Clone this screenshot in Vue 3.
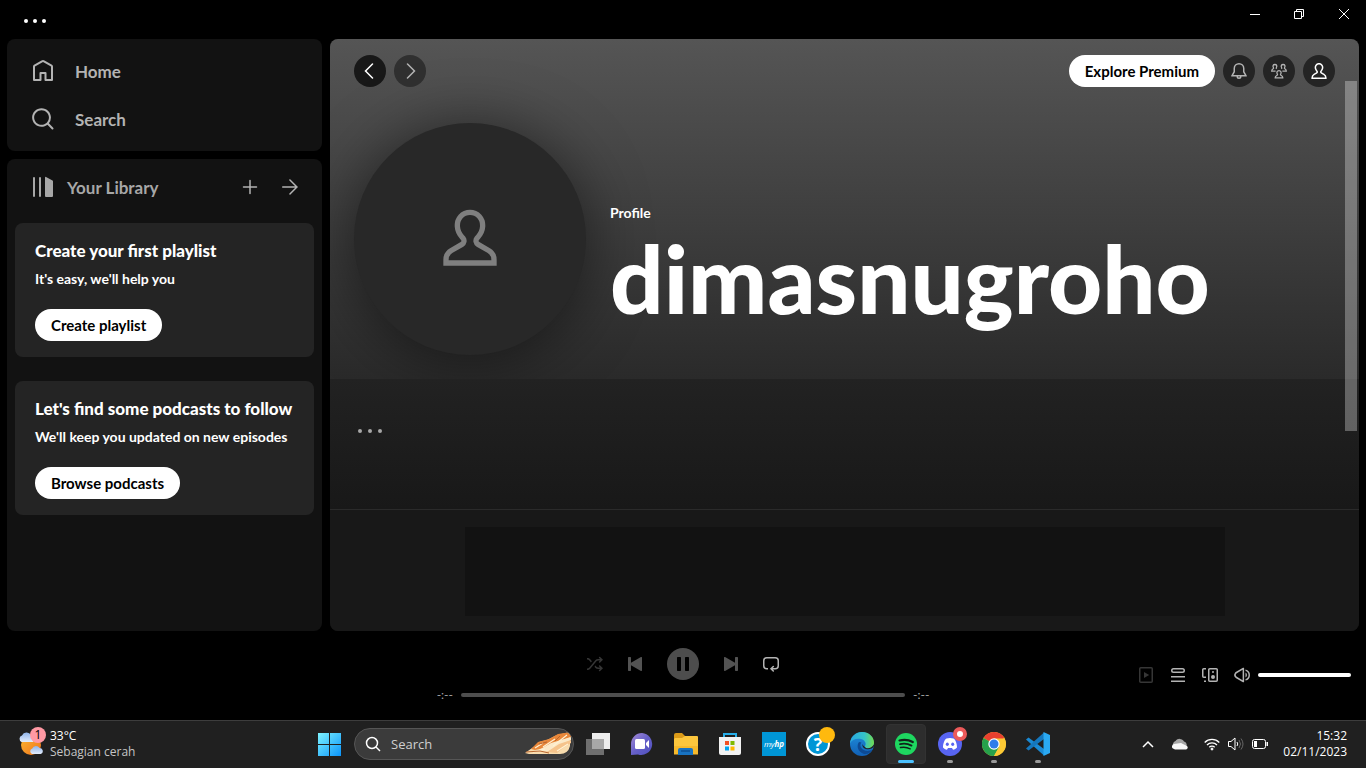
<script setup>
import { ref } from 'vue'

const volume = ref(100)
const position = ref(0)
const query = ref('')

const navLinks = [
  {
    label: 'Home',
    path: 'M12.5 3.247a1 1 0 0 0-1 0L4 7.577V20h4.5v-6a1 1 0 0 1 1-1h5a1 1 0 0 1 1 1v6H20V7.577l-7.5-4.33zm-2-1.732a3 3 0 0 1 3 0l7.5 4.33a2 2 0 0 1 1 1.732V21a1 1 0 0 1-1 1h-6.5a1 1 0 0 1-1-1v-6h-3v6a1 1 0 0 1-1 1H3a1 1 0 0 1-1-1V7.577a2 2 0 0 1 1-1.732l7.5-4.33z',
  },
  {
    label: 'Search',
    path: 'M10.533 1.279c-5.18 0-9.407 4.14-9.407 9.279s4.226 9.279 9.407 9.279c2.234 0 4.29-.77 5.907-2.058l4.353 4.353a1 1 0 1 0 1.414-1.414l-4.344-4.344a9.157 9.157 0 0 0 2.077-5.816c0-5.14-4.226-9.28-9.407-9.28zm-7.407 9.279c0-4.006 3.302-7.28 7.407-7.28s7.407 3.274 7.407 7.28-3.302 7.279-7.407 7.279-7.407-3.273-7.407-7.28z',
  },
]

const prompts = [
  { title: 'Create your first playlist', text: "It's easy, we'll help you", action: 'Create playlist' },
  { title: "Let's find some podcasts to follow", text: "We'll keep you updated on new episodes", action: 'Browse podcasts' },
]

const icons = {
  library: 'M3 22a1 1 0 0 1-1-1V3a1 1 0 0 1 2 0v18a1 1 0 0 1-1 1zM15.5 2.134A1 1 0 0 0 14 3v18a1 1 0 0 0 1 1h6a1 1 0 0 0 1-1V6.464a1 1 0 0 0-.5-.866l-6-3.464zM9 2a1 1 0 0 0-1 1v18a1 1 0 1 0 2 0V3a1 1 0 0 0-1-1z',
  plus: 'M15.25 8a.75.75 0 0 1-.75.75H8.75v5.75a.75.75 0 0 1-1.5 0V8.75H1.5a.75.75 0 0 1 0-1.5h5.75V1.5a.75.75 0 0 1 1.5 0v5.75h5.75a.75.75 0 0 1 .75.75z',
  arrow: 'M7.19 1A.749.749 0 0 1 8.47.47L16 7.99l-7.53 7.521a.75.75 0 0 1-1.234-.815.75.75 0 0 1 .174-.243l5.72-5.714H.75a.75.75 0 1 1 0-1.498h12.38L7.41 1.529a.749.749 0 0 1-.22-.53z',
  back: 'M11.03.47a.75.75 0 0 1 0 1.06L4.56 8l6.47 6.47a.75.75 0 1 1-1.06 1.06L2.44 8 9.97.47a.75.75 0 0 1 1.06 0z',
  forward: 'M4.97.47a.75.75 0 0 0 0 1.06L11.44 8l-6.47 6.47a.75.75 0 1 0 1.06 1.06L13.56 8 6.03.47a.75.75 0 0 0-1.06 0z',
  bell: 'M8 1.5a4 4 0 0 0-4 4v3.27a.75.75 0 0 1-.1.373L2.255 12h11.49L12.1 9.142a.75.75 0 0 1-.1-.374V5.5a4 4 0 0 0-4-4zm-5.5 4a5.5 5.5 0 0 1 11 0v3.067l2.193 3.809a.75.75 0 0 1-.65 1.124H10.5a2.5 2.5 0 0 1-5 0H.957a.75.75 0 0 1-.65-1.124L2.5 8.569V5.5zm4.5 8a1 1 0 1 0 2 0H7z',
  person: 'M6.233.371a4.388 4.388 0 0 1 5.002 1.052c.421.459.713.992.904 1.554.143.421.263 1.173.22 1.894-.078 1.322-.638 2.408-1.399 3.316l-.127.152a.75.75 0 0 0 .201 1.13l2.209 1.275a4.75 4.75 0 0 1 2.375 4.114V16H.382v-1.143a4.75 4.75 0 0 1 2.375-4.113l2.209-1.275a.75.75 0 0 0 .201-1.13l-.126-.152c-.761-.908-1.322-1.994-1.4-3.316-.043-.721.077-1.473.22-1.894a4.346 4.346 0 0 1 .904-1.554c.411-.448.91-.807 1.468-1.052zM8 1.5a2.888 2.888 0 0 0-2.13.937 2.85 2.85 0 0 0-.588 1.022c-.077.226-.175.783-.143 1.323.054.921.44 1.712 1.051 2.442l.129.154a2.25 2.25 0 0 1-.603 3.39l-2.209 1.275A3.25 3.25 0 0 0 1.902 14.5h12.196a3.25 3.25 0 0 0-1.605-2.457l-2.209-1.275a2.25 2.25 0 0 1-.603-3.39l.129-.154c.612-.73.997-1.52 1.052-2.442.032-.54-.067-1.097-.144-1.323a2.85 2.85 0 0 0-.588-1.022A2.888 2.888 0 0 0 8 1.5z',
  avatar: 'M10.165 11.101a2.5 2.5 0 0 1-.67 3.766L5.5 17.173A2.998 2.998 0 0 0 4 19.771v.232h16.001v-.232a3 3 0 0 0-1.5-2.598l-3.995-2.306a2.5 2.5 0 0 1-.67-3.766l.521-.626.002-.002c.8-.955 1.303-1.987 1.375-3.19.041-.706-.088-1.433-.187-1.727a3.717 3.717 0 0 0-.768-1.334 3.767 3.767 0 0 0-5.557 0c-.34.37-.593.82-.768 1.334-.1.294-.228 1.021-.187 1.727.072 1.203.575 2.235 1.375 3.19l.002.002.52.626zm5.727.657-.52.624a.5.5 0 0 0 .134.753l3.995 2.306a5 5 0 0 1 2.5 4.33v2.232H2V19.77a5 5 0 0 1 2.5-4.33l3.995-2.306a.5.5 0 0 0 .134-.753l-.518-.622-.002-.002c-1-1.192-1.735-2.62-1.838-4.356-.056-.947.101-1.935.29-2.49A5.713 5.713 0 0 1 7.748 2.87a5.768 5.768 0 0 1 8.505 0 5.713 5.713 0 0 1 1.187 2.043c.189.554.346 1.542.29 2.489-.103 1.736-.838 3.163-1.837 4.355z',
  shuffle: 'M13.151.922a.75.75 0 1 0-1.06 1.06L13.109 3H11.16a3.75 3.75 0 0 0-2.873 1.34l-6.173 7.356A2.25 2.25 0 0 1 .39 12.5H0V14h.391a3.75 3.75 0 0 0 2.873-1.34l6.173-7.356a2.25 2.25 0 0 1 1.724-.804h1.947l-1.017 1.018a.75.75 0 0 0 1.06 1.06L15.98 3.75 13.15.922zM.391 3.5H0V2h.391c1.109 0 2.16.49 2.873 1.34L4.89 5.277l-.979 1.167-1.796-2.14A2.25 2.25 0 0 0 .39 3.5zM7.5 10.723l.98-1.167.957 1.14a2.25 2.25 0 0 0 1.724.804h1.947l-1.017-1.018a.75.75 0 1 1 1.06-1.06l2.829 2.828-2.829 2.828a.75.75 0 1 1-1.06-1.06L13.109 13H11.16a3.75 3.75 0 0 1-2.873-1.34l-.787-.938z',
  previous: 'M3.3 1a.7.7 0 0 1 .7.7v5.15l9.95-5.744a.7.7 0 0 1 1.05.606v12.575a.7.7 0 0 1-1.05.607L4 9.149V14.3a.7.7 0 0 1-.7.7H1.7a.7.7 0 0 1-.7-.7V1.7a.7.7 0 0 1 .7-.7h1.6z',
  pause: 'M2.7 1a.7.7 0 0 0-.7.7v12.6a.7.7 0 0 0 .7.7h2.6a.7.7 0 0 0 .7-.7V1.7a.7.7 0 0 0-.7-.7H2.7zm8 0a.7.7 0 0 0-.7.7v12.6a.7.7 0 0 0 .7.7h2.6a.7.7 0 0 0 .7-.7V1.7a.7.7 0 0 0-.7-.7h-2.6z',
  next: 'M12.7 1a.7.7 0 0 0-.7.7v5.15L2.05 1.107A.7.7 0 0 0 1 1.712v12.575a.7.7 0 0 0 1.05.607L12 9.149V14.3a.7.7 0 0 0 .7.7h1.6a.7.7 0 0 0 .7-.7V1.7a.7.7 0 0 0-.7-.7h-1.6z',
  repeat: 'M0 4.75A3.75 3.75 0 0 1 3.75 1h8.5A3.75 3.75 0 0 1 16 4.75v5a3.75 3.75 0 0 1-3.75 3.75H9.81l1.018 1.018a.75.75 0 1 1-1.06 1.06L6.939 12.75l2.829-2.828a.75.75 0 1 1 1.06 1.06L9.811 12h2.439a2.25 2.25 0 0 0 2.25-2.25v-5a2.25 2.25 0 0 0-2.25-2.25h-8.5A2.25 2.25 0 0 0 1.5 4.75v5A2.25 2.25 0 0 0 3.75 12H5v1.5H3.75A3.75 3.75 0 0 1 0 9.75v-5z',
}

const extras = [
  {
    label: 'Now playing view',
    dim: true,
    path: 'M11.196 8 6 5v6l5.196-3zM15.002 1.75A1.75 1.75 0 0 0 13.252 0h-10.5a1.75 1.75 0 0 0-1.75 1.75v12.5c0 .966.783 1.75 1.75 1.75h10.5a1.75 1.75 0 0 0 1.75-1.75V1.75zm-1.75-.25a.25.25 0 0 1 .25.25v12.5a.25.25 0 0 1-.25.25h-10.5a.25.25 0 0 1-.25-.25V1.75a.25.25 0 0 1 .25-.25h10.5z',
  },
  {
    label: 'Queue',
    dim: false,
    path: 'M15 15H1v-1.5h14V15zm0-4.5H1V9h14v1.5zm-14-7A2.5 2.5 0 0 1 3.5 1h9a2.5 2.5 0 0 1 0 5h-9A2.5 2.5 0 0 1 1 3.5zm2.5-1a1 1 0 0 0 0 2h9a1 1 0 1 0 0-2h-9z',
  },
  {
    label: 'Connect to a device',
    dim: false,
    path: 'M6 2.75C6 1.784 6.784 1 7.75 1h6.5c.966 0 1.75.784 1.75 1.75v10.5A1.75 1.75 0 0 1 14.25 15h-6.5A1.75 1.75 0 0 1 6 13.25V2.75zm1.75-.25a.25.25 0 0 0-.25.25v10.5c0 .138.112.25.25.25h6.5a.25.25 0 0 0 .25-.25V2.75a.25.25 0 0 0-.25-.25h-6.5zm-6 0a.25.25 0 0 0-.25.25v6.5c0 .138.112.25.25.25H4V11H1.75A1.75 1.75 0 0 1 0 9.25v-6.5C0 1.784.784 1 1.75 1H4v1.5H1.75zM4 15H2v-1.5h2V15zM13 10a2 2 0 1 1-4 0 2 2 0 0 1 4 0zm-1-5a1 1 0 1 1-2 0 1 1 0 0 1 2 0z',
  },
  {
    label: 'Mute',
    dim: false,
    path: 'M9.741.85a.75.75 0 0 1 .375.65v13a.75.75 0 0 1-1.125.65l-6.925-4a3.642 3.642 0 0 1-1.33-4.967 3.639 3.639 0 0 1 1.33-1.332l6.925-4a.75.75 0 0 1 .75 0zm-6.924 5.3a2.139 2.139 0 0 0 0 3.7l5.8 3.35V2.8l-5.8 3.35zm8.683 4.29V5.56a2.75 2.75 0 0 1 0 4.88zM11.5 13.614a5.752 5.752 0 0 0 0-11.228v1.55a4.252 4.252 0 0 1 0 8.127v1.55z',
  },
]
</script>

<template>
  <div class="screen">
    <header class="titlebar">
      <button class="plain menu-dots" aria-label="Menu"><i></i><i></i><i></i></button>
      <div class="window-buttons">
        <button class="plain" aria-label="Minimize">
          <svg width="12" height="12" viewBox="0 0 12 12"><path d="M0 6.500h10" /></svg>
        </button>
        <button class="plain" aria-label="Restore">
          <svg width="12" height="12" viewBox="0 0 12 12"><path d="M.5 3.500h7v7h-7zM2.500 3.500v-2h7v7h-2" /></svg>
        </button>
        <button class="plain" aria-label="Close">
          <svg width="12" height="12" viewBox="0 0 12 12"><path d="M1 1l10 10M11 1L1 11" /></svg>
        </button>
      </div>
    </header>

    <div class="workspace">
      <aside class="sidebar">
        <nav class="panel nav">
          <a v-for="link in navLinks" :key="link.label" href="#" class="nav-link">
            <svg width="24" height="24" viewBox="0 0 24 24"><path :d="link.path" /></svg>
            <span>{{ link.label }}</span>
          </a>
        </nav>

        <section class="panel library">
          <div class="library-head">
            <button class="plain library-title">
              <svg width="24" height="24" viewBox="0 0 24 24"><path :d="icons.library" /></svg>
              <span>Your Library</span>
            </button>
            <button class="plain square" aria-label="Create playlist or folder">
              <svg width="16" height="16" viewBox="0 0 16 16"><path :d="icons.plus" /></svg>
            </button>
            <button class="plain square" aria-label="Show more">
              <svg width="16" height="16" viewBox="0 0 16 16"><path :d="icons.arrow" /></svg>
            </button>
          </div>
          <div class="prompts">
            <article v-for="prompt in prompts" :key="prompt.title" class="prompt">
              <h2>{{ prompt.title }}</h2>
              <p>{{ prompt.text }}</p>
              <button class="pill">{{ prompt.action }}</button>
            </article>
          </div>
        </section>
      </aside>

      <main class="content">
        <section class="profile">
          <div class="topbar">
            <button class="round dark" aria-label="Go back">
              <svg width="16" height="16" viewBox="0 0 16 16"><path :d="icons.back" /></svg>
            </button>
            <button class="round faded" aria-label="Go forward">
              <svg width="16" height="16" viewBox="0 0 16 16"><path :d="icons.forward" /></svg>
            </button>
            <span class="spacer"></span>
            <button class="pill">Explore Premium</button>
            <button class="round" aria-label="Notifications">
              <svg width="16" height="16" viewBox="0 0 16 16"><path :d="icons.bell" /></svg>
            </button>
            <button class="round" aria-label="Friend activity">
              <svg class="friends" width="16" height="16" viewBox="0 0 16 16">
                <path d="M4.600 8.200H.7c0-1.300.5-1.900 1.400-2.400.6-.4.600-.8.3-1.300C1.600 3.200 2 1.500 3.900 1.500s2.300 1.700 1.500 3c-.3.500-.3.900.3 1.300" />
                <path d="M11.400 8.200h3.900c0-1.300-.5-1.900-1.400-2.400-.6-.4-.6-.8-.3-1.300.8-1.300.4-3-1.500-3s-2.300 1.700-1.500 3c.3.500.3.900-.3 1.300" />
                <path d="M4.200 14.800c0-1.300.6-1.800 1.500-2.300.9-.5 1-.9.600-1.500C5.400 9.600 6 7.600 8 7.600s2.600 2 1.700 3.400c-.4.600-.3 1 .6 1.500.9.500 1.500 1 1.500 2.300z" />
              </svg>
            </button>
            <button class="round bright" aria-label="dimasnugroho">
              <svg width="16" height="16" viewBox="0 0 16 16"><path :d="icons.person" /></svg>
            </button>
          </div>
          <div class="hero">
            <div class="avatar">
              <svg width="64" height="64" viewBox="0 0 24 24"><path :d="icons.avatar" /></svg>
            </div>
            <div class="hero-text">
              <span class="kind">Profile</span>
              <h1>dimasnugroho</h1>
            </div>
          </div>
        </section>

        <section class="actions">
          <button class="plain more" aria-label="More options"><i></i><i></i><i></i></button>
        </section>

        <section class="banner"><div class="banner-slot"></div></section>
        <div class="scroll-thumb"></div>
      </main>
    </div>

    <footer class="player">
      <div class="transport">
        <div class="buttons">
          <button class="plain square shuffle" aria-label="Shuffle">
            <svg width="16" height="16" viewBox="0 0 16 16"><path :d="icons.shuffle" /></svg>
          </button>
          <button class="plain square muted" aria-label="Previous">
            <svg width="16" height="16" viewBox="0 0 16 16"><path :d="icons.previous" /></svg>
          </button>
          <button class="play" aria-label="Pause">
            <svg width="16" height="16" viewBox="0 0 16 16"><path :d="icons.pause" /></svg>
          </button>
          <button class="plain square muted" aria-label="Next">
            <svg width="16" height="16" viewBox="0 0 16 16"><path :d="icons.next" /></svg>
          </button>
          <button class="plain square" aria-label="Repeat">
            <svg width="16" height="16" viewBox="0 0 16 16"><path :d="icons.repeat" /></svg>
          </button>
        </div>
        <div class="progress">
          <span class="time start">-:--</span>
          <input v-model="position" class="slider" type="range" min="0" max="100" aria-label="Playback position" />
          <span class="time">-:--</span>
        </div>
      </div>
      <div class="extras">
        <button v-for="item in extras" :key="item.label" class="plain square" :class="{ dim: item.dim }" :aria-label="item.label">
          <svg width="16" height="16" viewBox="0 0 16 16"><path :d="item.path" /></svg>
        </button>
        <input v-model="volume" class="slider volume" type="range" min="0" max="100" aria-label="Volume" />
      </div>
    </footer>

    <footer class="taskbar">
      <button class="plain weather">
        <span class="weather-icon">
          <svg width="26" height="26" viewBox="0 0 26 26">
            <defs>
              <linearGradient id="sun" x1="0" y1="0" x2="1" y2="1"><stop offset="0" stop-color="#fbb931" /><stop offset="1" stop-color="#f0721c" /></linearGradient>
              <linearGradient id="cloud" x1="0" y1="0" x2="0" y2="1"><stop offset="0" stop-color="#8fb4ea" /><stop offset="1" stop-color="#e3edfc" /></linearGradient>
            </defs>
            <circle cx="13" cy="14" r="10" fill="url(#sun)" />
            <path d="M3.500 11a3.500 3.500 0 0 1 .5-6.500 5 5 0 0 1 9-.5 4 4 0 0 1 2 7z" fill="url(#cloud)" />
            <path d="M14 23a3 3 0 0 1 .3-5.600 4 4 0 0 1 7.200-.3 3 3 0 0 1 1 5.900z" fill="url(#cloud)" />
          </svg>
          <b class="badge">1</b>
        </span>
        <span class="weather-text"><span class="temp">33°C</span><span>Sebagian cerah</span></span>
      </button>

      <div class="apps">
        <button class="plain app" aria-label="Start">
          <svg width="24" height="24" viewBox="0 0 24 24">
            <defs><linearGradient id="win" x1="0" y1="0" x2="1" y2="1"><stop offset="0" stop-color="#7df3ff" /><stop offset="1" stop-color="#0a94fb" /></linearGradient></defs>
            <path d="M0 1h11v11H0zM12 1h11v11H12zM0 13h11v11H0zM12 13h11v11H12z" fill="url(#win)" />
          </svg>
        </button>

        <label class="search">
          <svg width="16" height="16" viewBox="0 0 16 16"><circle cx="7" cy="7" r="5.500" /><path d="M11 11l4 4" /></svg>
          <input v-model="query" type="text" placeholder="Search" aria-label="Search" />
          <svg class="art" width="46" height="24" viewBox="0 0 46 24">
            <path d="M0 21L10 14 14 10 22 8 32 3 45 0V14Q43 22 35 22H4z" fill="#f8dcae" />
            <path d="M6 17L13 10 24 7 33 2 46 0V5L34 9 24 15 10 18z" fill="#e8873a" />
            <path d="M12 19L26 11 36 8 46 5V8L34 13 24 19z" fill="#fbe9c8" />
            <path d="M22 20L34 12 46 8V11L38 16 32 21z" fill="#f5c38b" />
            <path d="M10 16L18 11M18 15L30 7M28 14L42 3M8 20L20 17M32 19L43 12" fill="none" stroke="#fff1d2" stroke-width="1.200" />
            <path d="M1 20L15 19 24 21M14 12L22 10M30 9L35 4" fill="none" stroke="#b8652e" stroke-width="1" />
          </svg>
        </label>

        <button class="plain app" aria-label="Task view">
          <svg width="24" height="24" viewBox="0 0 24 24">
            <path d="M6 1h18v16H6z" fill="#ececec" /><path d="M0 7h18v16H0z" fill="#6f6f6f" /><path d="M6 7h12v10H6z" fill="#a8a8a8" />
          </svg>
        </button>
        <button class="plain app" aria-label="Chat">
          <svg width="24" height="24" viewBox="0 0 24 24">
            <defs><linearGradient id="chat" x1="0" y1="0" x2="1" y2="1"><stop offset="0" stop-color="#a58bd6" /><stop offset=".5" stop-color="#6660c8" /><stop offset="1" stop-color="#4f50c0" /></linearGradient></defs>
            <path d="M12 1a11 11 0 1 1-4 21.500L1 23V12A11 11 0 0 1 12 1z" fill="url(#chat)" />
            <rect x="5" y="7" width="10" height="10" rx="1.500" fill="#fff" /><path d="M16 11l3-3v8l-3-3z" fill="#fff" />
          </svg>
        </button>
        <button class="plain app" aria-label="File Explorer">
          <svg width="24" height="24" viewBox="0 0 24 24">
            <path d="M0 3q0-2 2-2h6l3 3v4H0z" fill="#db9a18" />
            <path d="M1 6h7l3-2h12q1 0 1 1v17H0V7z" fill="#fcc63d" /><path d="M0 14h24v8.500H0z" fill="#f6b92c" />
            <path d="M4 23v-5q0-2 2-2h11q2 0 2 2v5z" fill="#1873c2" /><path d="M7 19h9" stroke="#0c4f93" stroke-width="1.500" />
          </svg>
        </button>
        <button class="plain app" aria-label="Microsoft Store">
          <svg width="24" height="24" viewBox="0 0 24 24">
            <path d="M6 7V2h12v5" fill="none" stroke="#28aee9" stroke-width="2" /><path d="M1 5h22v16q0 2-2 2H3q-2 0-2-2z" fill="#f2f2f2" />
            <path d="M7 9h4v4H7z" fill="#f25022" /><path d="M12.500 9h4v4h-4z" fill="#7fba00" /><path d="M7 14.500h4v4H7z" fill="#00a4ef" /><path d="M12.500 14.500h4v4h-4z" fill="#ffb900" />
          </svg>
        </button>
        <button class="plain app"><span class="myhp">my<b>hp</b></span></button>
        <button class="plain app" aria-label="HP Support">
          <span class="help">?</span><span class="help-dot"></span>
        </button>
        <button class="plain app" aria-label="Edge">
          <svg width="24" height="24" viewBox="0 0 24 24">
            <defs>
              <linearGradient id="edge-top" x1="0" y1="0" x2="1" y2="0"><stop offset="0" stop-color="#28a7e2" /><stop offset=".6" stop-color="#35c2c8" /><stop offset="1" stop-color="#72dc4e" /></linearGradient>
              <linearGradient id="edge-low" x1="0" y1="0" x2="0" y2="1"><stop offset="0" stop-color="#1f8fdd" /><stop offset="1" stop-color="#1160b5" /></linearGradient>
            </defs>
            <circle cx="12" cy="12" r="12" fill="url(#edge-low)" />
            <path d="M0 11.500C.5 4.500 6 0 12 0c7 0 12 5 12 10.500 0 4-3 6-6 6s-4-1.200-3-2.500c1.500-2 .5-6-4-7C6 6 1.500 8 0 11.500z" fill="url(#edge-top)" />
            <path d="M9 10c-3 4-1 10 5 12 4 .5 7-2 8.500-4.500-4 2.500-9.500 1.500-11.500-2-.9-1.700-.8-3.800.5-5z" fill="#0d4a94" />
            <path d="M24 14c-1 2.500-4 3.500-7 3.200-2.500-.3-5-1.700-4.500-5.200.5 2.500 3 3 3.500 4 3 1 6-.5 8-3.500z" fill="#212121" />
          </svg>
        </button>
        <button class="plain app active" aria-label="Spotify">
          <svg width="24" height="24" viewBox="0 0 24 24">
            <circle cx="12" cy="12" r="11" fill="#1ed760" />
            <g fill="none" stroke="#10231a" stroke-linecap="round"><path d="M5.500 8.500q7-2 13.300 1.500" stroke-width="2.200" /><path d="M6 12.200q6-1.600 11.500 1.400" stroke-width="1.800" /><path d="M6.500 15.600q5-1.200 9.700 1.200" stroke-width="1.500" /></g>
          </svg>
        </button>
        <button class="plain app running" aria-label="Discord">
          <svg width="24" height="24" viewBox="0 0 24 24">
            <circle cx="12" cy="12" r="12" fill="#5865f2" />
            <path d="M8.500 6.500q3.500-1 7 0c2 1 3.500 5 3.500 9-1 1.200-2.400 2-4 2.200l-1-1.700h-4l-1 1.700c-1.600-.2-3-1-4-2.200 0-4 1.500-8 3.500-9z" fill="#fff" />
            <ellipse cx="9.300" cy="12.300" rx="1.500" ry="1.700" fill="#5865f2" /><ellipse cx="14.700" cy="12.300" rx="1.500" ry="1.700" fill="#5865f2" />
          </svg>
          <span class="alert"></span>
        </button>
        <button class="plain app running" aria-label="Chrome">
          <svg width="24" height="24" viewBox="0 0 24 24">
            <circle cx="12" cy="12" r="12" fill="#fcc934" />
            <path d="M12 12L1.600 6A12 12 0 0 1 22.400 6z" fill="#e8402f" /><path d="M12 12L1.600 6A12 12 0 0 0 12 24l5.200-9z" fill="#26a14b" />
            <path d="M12 6.500h10.600A12 12 0 0 1 12 24l5-9z" fill="#fcc934" />
            <circle cx="12" cy="12" r="5.700" fill="#fff" /><circle cx="12" cy="12" r="4.500" fill="#2f7de9" />
          </svg>
        </button>
        <button class="plain app running" aria-label="Visual Studio Code">
          <svg width="24" height="24" viewBox="0 0 24 24">
            <path d="M0 7.500L2.500 5.500 18 17v6.500z" fill="#1a8ad4" /><path d="M0 16.500L2.500 18.500 18 7V.5z" fill="#1577bd" /><path d="M17.500 0L24 3v18l-6.500 3z" fill="#2aa9f2" />
          </svg>
        </button>
      </div>

      <div class="tray">
        <button class="plain" aria-label="Show hidden icons">
          <svg class="line" width="12" height="12" viewBox="0 0 12 12"><path d="M1 9l5-5 5 5" stroke-width="1.500" /></svg>
        </button>
        <button class="plain cloud" aria-label="OneDrive">
          <svg width="16" height="12" viewBox="0 0 16 12"><path d="M2 9.500A4 4 0 0 1 3.500 3 5 5 0 0 1 12 3.500 3.500 3.500 0 0 1 14 9z" fill="#a6a6a6" /><path d="M1 10.500a2.500 2.500 0 0 1 1-4.500l7-1 6 3a2 2 0 0 1-1 3.500H3z" fill="#f7f7f7" /></svg>
        </button>
        <button class="plain status" aria-label="Network, volume and battery">
          <svg class="line" width="16" height="14" viewBox="0 0 16 14"><path d="M.7 5.500a10.300 10.300 0 0 1 14.600 0M3 8a7 7 0 0 1 10 0M5.300 10.300a3.800 3.800 0 0 1 5.400 0" stroke-width="1.300" /><circle cx="8" cy="12" r="1" fill="#fff" /></svg>
          <svg class="line" width="16" height="14" viewBox="0 0 16 14"><path d="M.5 4.500h2.500l4-3.500v12l-4-3.500h-2.500z" /><path d="M9 5q1.500 2 0 4" /><path d="M11 3q3 4 0 8M13 1.500q4 5.500 0 11" stroke="#666" /></svg>
          <svg width="16" height="14" viewBox="0 0 16 14"><rect x=".5" y="2.500" width="13" height="9" rx="2" fill="none" stroke="#fff" /><path d="M2 4h3v6H2zM14.500 5H16v4h-1.500z" fill="#fff" /></svg>
        </button>
        <button class="plain clock"><span>15:32</span><span>02/11/2023</span></button>
      </div>
    </footer>
  </div>
</template>

<style>
body {
  background: #000;
}
</style>

<style scoped>
* {
  box-sizing: border-box;
}
.screen {
  display: flex;
  flex-direction: column;
  min-height: 100vh;
  background: #000;
  color: #fff;
  font-family: Lato, "Liberation Sans", sans-serif;
}
svg {
  display: block;
  flex: none;
}
h1, h2, p {
  margin: 0;
}
button, input {
  font: inherit;
}
.plain {
  display: flex;
  align-items: center;
  justify-content: center;
  padding: 0;
  border: 0;
  background: none;
  color: inherit;
}
.plain svg, .round svg, .play svg, .nav-link svg {
  fill: currentColor;
}
.square {
  width: 32px;
  height: 32px;
  color: #b3b3b3;
}

/* title bar */
.titlebar {
  display: flex;
  justify-content: space-between;
  align-items: flex-start;
  height: 39px;
}
.menu-dots {
  gap: 5px;
  padding: 19px 24px 0;
}
.menu-dots i {
  width: 4px;
  height: 4px;
  border-radius: 50%;
  background: #fff;
}
.window-buttons {
  display: flex;
}
.window-buttons button {
  width: 44px;
  height: 28px;
}
.window-buttons svg {
  fill: none;
  stroke: #fff;
}

/* columns */
.workspace {
  display: grid;
  grid-template-columns: 315px minmax(0, 1fr);
  gap: 8px;
  flex: 1;
  padding: 0 7px;
}
.sidebar {
  display: flex;
  flex-direction: column;
  gap: 8px;
}
.panel {
  border-radius: 8px;
  background: #121212;
  color: #a7a7a7;
  font-size: 17px;
  font-weight: 700;
}
.nav {
  padding: 8px 24px;
}
.nav-link {
  display: flex;
  align-items: center;
  gap: 20px;
  height: 48px;
  color: #b3b3b3;
  text-decoration: none;
}
.library {
  flex: 1;
  padding: 8px;
}
.library-head {
  display: flex;
  align-items: center;
  gap: 8px;
  height: 40px;
  padding: 0 8px 0 16px;
}
.library-title {
  gap: 12px;
  margin-right: auto;
  font-weight: 700;
}
.prompts {
  display: flex;
  flex-direction: column;
  gap: 24px;
  padding-top: 16px;
}
.prompt {
  padding: 16px 20px;
  border-radius: 8px;
  background: #242424;
  color: #fff;
}
.prompt h2 {
  font-size: 17px;
  font-weight: 900;
  line-height: 24px;
}
.prompt p {
  margin: 4px 0 18px;
  font-size: 14px;
  line-height: 24px;
}
.pill {
  display: block;
  height: 32px;
  padding: 0 16px;
  border: 0;
  border-radius: 16px;
  background: #fff;
  color: #000;
  font-size: 15px;
  font-weight: 700;
}

/* profile */
.content {
  position: relative;
  display: flex;
  flex-direction: column;
  overflow: hidden;
  border-radius: 8px;
  background: #121212;
}
.profile {
  background: linear-gradient(#555, #2a2a2a);
}
.topbar {
  display: flex;
  align-items: center;
  gap: 8px;
  height: 64px;
  padding: 0 24px;
}
.spacer {
  flex: 1;
}
.round {
  display: flex;
  align-items: center;
  justify-content: center;
  width: 32px;
  height: 32px;
  padding: 0;
  border: 0;
  border-radius: 50%;
  background: #242424;
  color: #b3b3b3;
}
.round.dark {
  background: #181818;
  color: #fff;
}
.round.faded {
  background: #303030;
}
.round.bright {
  color: #fff;
}
.round .friends {
  fill: none;
  stroke: currentColor;
  stroke-width: 1.3;
}
.hero {
  display: flex;
  align-items: flex-end;
  gap: 24px;
  padding: 20px 24px 24px;
}
.avatar {
  display: flex;
  flex: none;
  align-items: center;
  justify-content: center;
  width: 232px;
  height: 232px;
  border-radius: 50%;
  background: #282828;
  box-shadow: 0 4px 60px rgba(0, 0, 0, 0.5);
}
.avatar svg {
  fill: #7f7f7f;
}
.hero-text {
  display: flex;
  flex-direction: column;
}
.kind {
  font-size: 14px;
  font-weight: 700;
  line-height: 17px;
}
h1 {
  padding-bottom: 21px;
  font-size: 94px;
  font-weight: 900;
  line-height: 113px;
}
.actions {
  flex: 1;
  min-height: 130px;
  padding: 36px 24px;
  background: linear-gradient(#222, #181818);
}
.more {
  gap: 6px;
  width: 32px;
  height: 32px;
}
.more i {
  width: 4px;
  height: 4px;
  border-radius: 50%;
  background: #a7a7a7;
}
.banner {
  padding: 17px 24px 15px;
  border-top: 1px solid #2a2a2a;
  background: #181818;
}
.banner-slot {
  max-width: 760px;
  height: 89px;
  margin: 0 auto;
  background: #121212;
}
.scroll-thumb {
  position: absolute;
  top: 42px;
  right: 2px;
  width: 12px;
  height: 350px;
  background: rgba(255, 255, 255, 0.3);
}

/* player */
.player {
  display: grid;
  grid-template-columns: 3fr 4fr 3fr;
  align-items: center;
  height: 89px;
  padding: 0 8px;
}
.transport {
  grid-column: 2;
}
.buttons {
  display: flex;
  align-items: center;
  justify-content: center;
  gap: 8px;
}
.play {
  display: flex;
  align-items: center;
  justify-content: center;
  width: 32px;
  height: 32px;
  margin: 0 8px;
  padding: 0;
  border: 0;
  border-radius: 50%;
  background: #4d4d4d;
  color: #000;
}
.muted {
  color: #535353;
}
.shuffle, .dim {
  color: #363636;
}
.progress {
  display: flex;
  align-items: center;
  gap: 8px;
  height: 16px;
  margin-top: 7px;
}
.time {
  width: 40px;
  color: #a7a7a7;
  font-size: 12px;
  line-height: 16px;
}
.time.start {
  text-align: right;
}
.slider {
  flex: 1;
  min-width: 0;
  height: 4px;
  margin: 0;
  appearance: none;
  border-radius: 2px;
  background: #4d4d4d;
}
.slider::-webkit-slider-thumb {
  width: 0;
  height: 0;
  appearance: none;
}
.extras {
  display: flex;
  align-items: center;
  justify-content: flex-end;
  padding: 0 7px 2px 0;
}
.volume {
  flex: 0 1 93px;
  background: #fff;
}

/* taskbar */
.taskbar {
  display: grid;
  grid-template-columns: 1fr auto 1fr;
  align-items: center;
  height: 48px;
  padding-left: 2px;
  background: #202020;
  box-shadow: inset 0 1px #3d3d3d;
  font-family: "Open Sans", "Noto Sans", sans-serif;
  font-size: 12px;
  line-height: 16px;
}
.weather {
  justify-self: start;
  gap: 6px;
  padding-left: 16px;
}
.weather-icon {
  position: relative;
}
.badge {
  position: absolute;
  top: -4px;
  right: -2px;
  width: 16px;
  border-radius: 50%;
  background: #ff99a4;
  color: #000;
  font-weight: 400;
}
.weather-text {
  display: flex;
  flex-direction: column;
  color: #c5c5c5;
  text-align: left;
}
.temp {
  color: #fff;
}
.apps {
  display: flex;
  align-items: center;
}
.app {
  position: relative;
  width: 44px;
  height: 40px;
}
.app.active {
  width: 40px;
  margin: 0 2px;
  border: 1px solid #323232;
  border-radius: 4px;
  background: #2d2d2d;
}
.app.running::after, .app.active::after {
  content: "";
  position: absolute;
  bottom: 1px;
  width: 6px;
  height: 3px;
  border-radius: 2px;
  background: #9a9a9a;
}
.app.active::after {
  bottom: 0;
  width: 16px;
  background: #4cc2ff;
}
.search {
  display: flex;
  align-items: center;
  gap: 10px;
  width: 220px;
  height: 32px;
  margin: 0 2px;
  padding: 0 2px 0 10px;
  overflow: hidden;
  border: 1px solid #565656;
  border-radius: 16px;
  background: #3b3b3b;
}
.search svg {
  fill: none;
  stroke: #fff;
  stroke-width: 1.5;
}
.search .art {
  stroke: none;
  border-radius: 0 0 12px 0;
}
.search input {
  flex: 1;
  min-width: 0;
  padding: 0;
  border: 0;
  background: none;
  color: #fff;
  font-size: 13px;
}
.search input::placeholder {
  color: #cfcfcf;
}
.myhp {
  width: 24px;
  height: 24px;
  background: #0096d6;
  color: #fff;
  font-size: 8px;
  font-style: italic;
  line-height: 24px;
}
.help {
  width: 24px;
  height: 24px;
  border: 2px solid #fff;
  border-radius: 50%;
  background: #0096d6;
  color: #fff;
  font-size: 18px;
  font-weight: 700;
  line-height: 20px;
}
.help-dot, .alert {
  position: absolute;
  top: 3px;
  right: 5px;
  width: 16px;
  height: 16px;
  border-radius: 50%;
  background: #ffb90e;
}
.alert {
  width: 14px;
  height: 14px;
  border: 4px solid #ec5a5a;
  background: #fff;
}
.tray {
  display: flex;
  align-items: center;
  justify-self: end;
  padding-right: 19px;
}
.plain .line {
  fill: none;
  stroke: #fff;
}
.cloud {
  margin: 0 16px 0 18px;
}
.status {
  gap: 8px;
}
.clock {
  flex-direction: column;
  align-items: flex-end;
  margin-left: 15px;
}
</style>
